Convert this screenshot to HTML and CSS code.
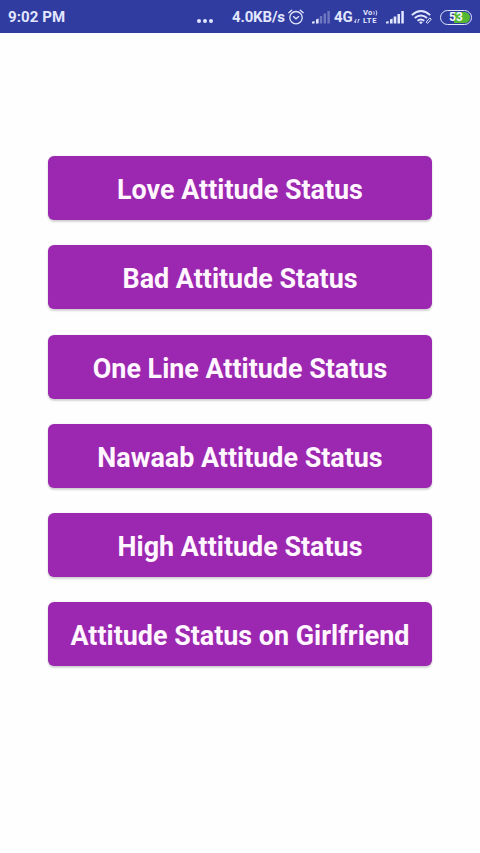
FILE: index.html
```html
<!DOCTYPE html>
<html lang="en">
<head>
<meta charset="utf-8">
<title>Attitude Status</title>
<link rel="stylesheet" href="styles.css">
</head>
<body>
<header class="status-bar">
  <span class="clock">9:02 PM</span>
  <svg class="more" width="18" height="6" viewBox="0 0 18 6" fill="currentColor"><circle cx="3" cy="3" r="2"/><circle cx="9" cy="3" r="2"/><circle cx="15" cy="3" r="2"/></svg>
  <span class="speed">4.0KB/s</span>
  <svg class="alarm" width="16" height="16" viewBox="0 0 16 16" fill="none" stroke="currentColor" stroke-width="1.3" stroke-linecap="round"><circle cx="8" cy="8.7" r="6.2"/><path d="M.8 3.7 3.7 1.2M15.2 3.7l-2.9-2.5M5.5 7.6 8 9.8l2.7-2.2"/></svg>
  <svg class="signal-one" width="18" height="14" viewBox="0 0 18 14" fill="currentColor"><path d="M0 11.8 2.6 11v2.5H0zM4 9.5l2.6-1v5H4z"/><path opacity=".35" d="M7.8 6h2.4v7.5H7.8zM11.6 3.5H14v10h-2.4zM15.4 1h2.4v12.5h-2.4z"/></svg>
  <span class="network">4G</span>
  <svg class="data" width="6" height="6" viewBox="0 0 6 6" fill="none" stroke="currentColor" stroke-width=".9"><path d="M.4 3.2 1.3 4.8 2.1 1M3.8 5 4.6 1l1 1.2"/></svg>
  <span class="volte"><span class="volte-top">Vo<svg width="5" height="6" viewBox="0 0 5 6" fill="none" stroke="currentColor" stroke-width=".9"><path d="M.8 1.2q1 1.8 0 3.6M3 .4q1.8 2.6 0 5.2"/></svg></span><span class="volte-bottom">LTE</span></span>
  <svg class="signal-two" width="18" height="14" viewBox="0 0 18 14" fill="currentColor"><path d="M0 11.8 2.6 11v2.5H0zM4 9.5l2.6-1v5H4zM7.7 6.5h2.6v7H7.7zM11.5 4H14v9.5h-2.5zM15.3 1h2.5v12.5h-2.5z"/></svg>
  <svg class="wifi" width="21" height="15" viewBox="0 0 21 15" fill="none" stroke="currentColor" stroke-width="1.9"><path d="M.8 5.1q9.2-8 18.4 0M3.7 8q6.2-5.2 12.4 0M6.5 10.7q3.4-2.6 6.8 0"/><path d="M7.9 12.1q2-1.4 4 0l-2 2.2z" fill="currentColor" stroke="none"/><path stroke-width="1" d="m15.1 12.1 3.7-4.2 1.5 1.3-3.7 4.2z"/></svg>
  <span class="battery"><span class="level">53</span></span>
</header>
<main class="menu">
  <button class="item">Love Attitude Status</button>
  <button class="item">Bad Attitude Status</button>
  <button class="item">One Line Attitude Status</button>
  <button class="item">Nawaab Attitude Status</button>
  <button class="item">High Attitude Status</button>
  <button class="item">Attitude Status on Girlfriend</button>
</main>
</body>
</html>
```

FILE: styles.css
```css
* { box-sizing: border-box; }
body {
  margin: 0;
  height: 853px;
  background: #fefefe;
  font-family: Roboto, sans-serif;
  overflow: hidden;
}
.status-bar {
  display: flex;
  align-items: center;
  height: 33px;
  padding: 1px 8px 0;
  background: #303c9f;
  color: #e2e7ff;
  font-size: 15px;
  font-weight: 700;
  line-height: 18px;
  white-space: nowrap;
}
.status-bar svg { display: block; flex: none; }
.clock { width: 188px; flex: none; letter-spacing: .1px; }
.status-bar .more { margin-top: 7px; }
.speed { width: 54px; margin-left: 18px; flex: none; letter-spacing: -.15px; }
.alarm { margin-left: 2px; }
.signal-one { margin-left: 8px; }
.network { width: 20px; margin-left: 4px; flex: none; }
.status-bar .data { margin-top: 7px; }
.volte {
  display: flex;
  flex-direction: column;
  width: 17px;
  margin-left: 3px;
  font-size: 7.6px;
  line-height: 8px;
  flex: none;
}
.volte-top { display: flex; align-items: center; height: 8px; letter-spacing: .3px; }
.volte-bottom { height: 8px; letter-spacing: .6px; }
.signal-two { margin-left: 6px; }
.wifi { margin-left: 7px; }
.battery {
  display: flex;
  width: 32px;
  height: 15px;
  margin-left: 8px;
  padding: 1px;
  border: 1.5px solid #e2e7ff;
  border-radius: 8px;
  flex: none;
}
.level {
  flex: 1;
  border-radius: 6px;
  background: linear-gradient(90deg, #303c9f 0 44%, #55b832 44%);
  color: #f3f6ff;
  font-size: 12px;
  line-height: 11px;
  text-align: center;
}
.menu {
  display: flex;
  flex-direction: column;
  gap: 25.25px;
  padding: 123px 48px 0;
}
.item {
  height: 64px;
  padding: 4px 0 0;
  border: 0;
  border-radius: 6px;
  background: #9c27b0;
  box-shadow: 0 2px 2px rgba(0, 0, 0, .16), 0 0 2px rgba(0, 0, 0, .1);
  color: #fff6ff;
  font: 700 26.9px/32px Roboto, sans-serif;
  white-space: nowrap;
}
```
